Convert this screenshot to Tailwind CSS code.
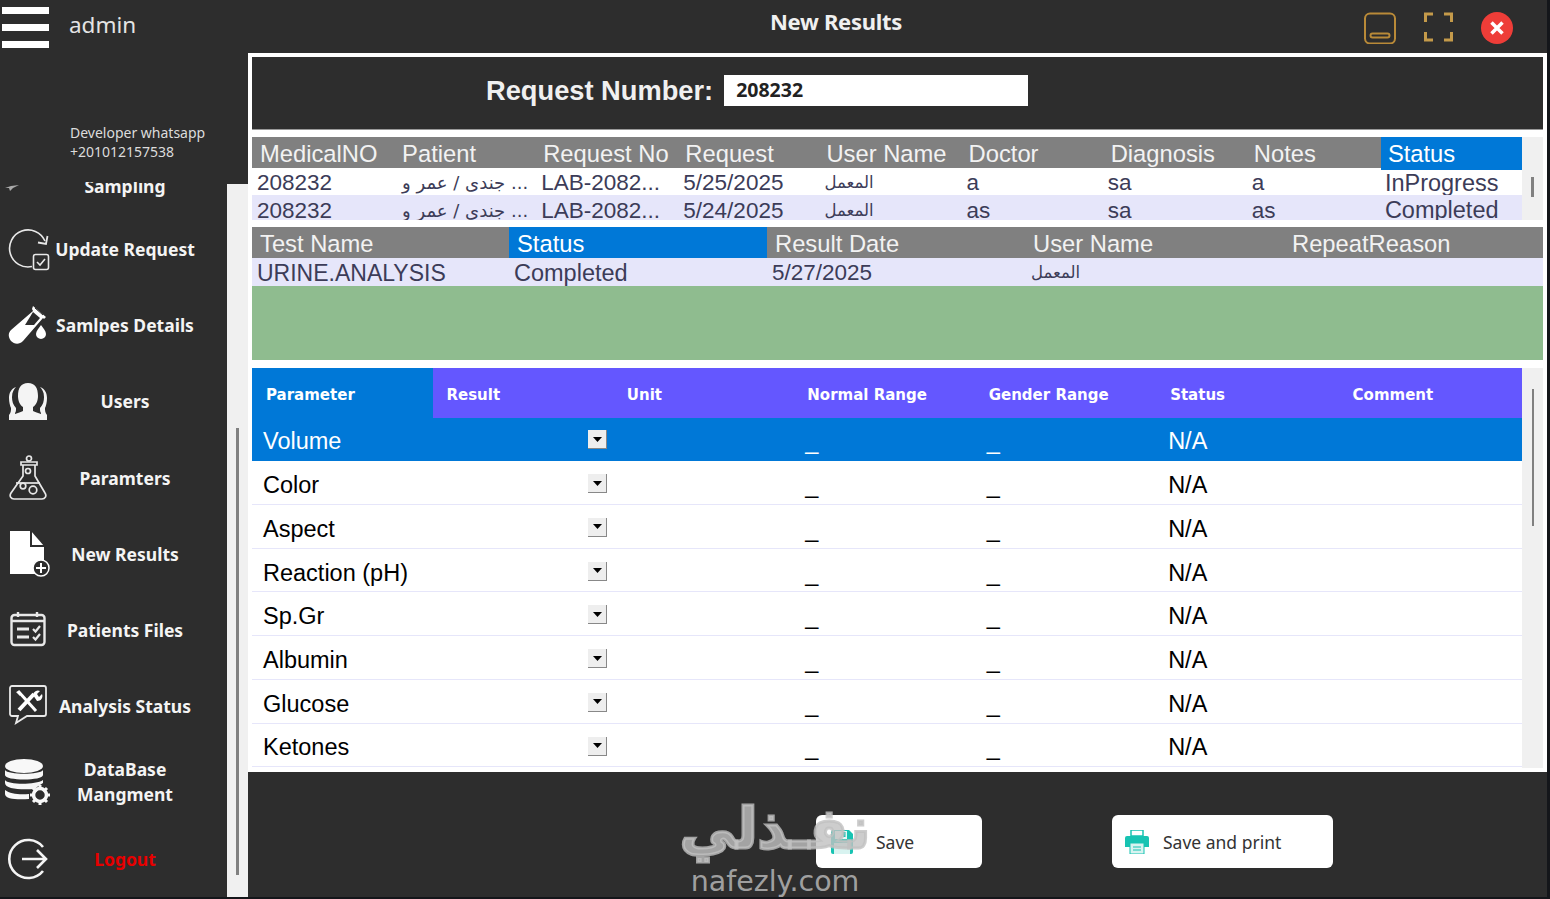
<!DOCTYPE html>
<html lang="en">
<head>
<meta charset="utf-8">
<title>New Results</title>
<script src="https://cdn.jsdelivr.net/npm/@tailwindcss/browser@4"></script>
</head>
<body class="bg-[#14161a] overflow-hidden">
<div class="relative flex w-[1547px] h-[897px] bg-[#2d2d2d] font-['Liberation_Sans',sans-serif] overflow-hidden">

  <!-- Sidebar -->
  <aside class="w-[248px] shrink-0 flex flex-col">
    <div class="h-[182px] shrink-0 flex flex-col">
      <div class="flex h-[55px] shrink-0">
        <div class="w-[47px] ml-[2px] pt-[7px] flex flex-col gap-[10px]">
          <div class="h-[7px] bg-white"></div>
          <div class="h-[7px] bg-white"></div>
          <div class="h-[7px] bg-white"></div>
        </div>
        <div class="ml-[20px] mt-[8px] text-[22.500px] leading-[34px] text-[#e4e4e4] font-['Noto_Sans',sans-serif]">admin</div>
      </div>
      <div class="ml-[70px] mt-[68px] text-[14px] leading-[19px] text-[#dcdcdc] font-['Noto_Sans',sans-serif] whitespace-nowrap">Developer whatsapp<br>+201012157538</div>
    </div>
    <div class="flex flex-1 min-h-0">
      <nav class="w-[227px] shrink-0 font-['Noto_Sans',sans-serif] font-bold text-[17.500px] text-[#f4f4f4] overflow-hidden">
        <div class="h-[29px] flex overflow-hidden">
          <div class="w-[50px] pl-[5px] pt-[3px]"><svg width="16" height="6" viewBox="0 0 16 6"><path d="M0 3 6 1l8-1-4 2-2 1-3 3-1-3z" fill="#aaa"/></svg></div>
          <div class="w-[150px] text-center leading-[24px] -mt-[8px]">Sampling</div>
        </div>
        <div class="h-[76.2px] flex items-center">
          <div class="w-[50px] pl-[7px]"><svg width="44" height="44" viewBox="0 0 44 44" fill="none" stroke="#e8e8e8" stroke-width="1.600"><path d="M38 14A18.500 18.500 0 1 0 25 39.500"/><path d="M31 15.500l8 1.500 1.500-8" stroke-width="1.800"/><rect x="26.500" y="27.500" width="15" height="15" rx="2"/><path d="M30 35l3 3 5-6"/></svg></div>
          <div class="w-[150px] text-center leading-[24px] whitespace-nowrap">Update Request</div>
        </div>
        <div class="h-[76.2px] flex items-center">
          <div class="w-[50px] pl-[7px]"><svg width="40" height="40" viewBox="0 0 40 40" fill="#fff"><path d="M26 1l13 11-2 2-1-1-20 23c-4 4-9 3-12 0-3-4-3-8 0-11L26 6l-1-2z"/><path d="M26 7l7 6-6 7H18z" fill="#2d2d2d"/><path d="M28 3l8 7" stroke="#2d2d2d" stroke-width="1" fill="none"/><path d="M34 20c2 3 5 6 5 9a5 5 0 0 1-10 0c0-3 3-6 5-9z"/></svg></div>
          <div class="w-[150px] text-center leading-[24px] whitespace-nowrap">Samlpes Details</div>
        </div>
        <div class="h-[76.2px] flex items-center">
          <div class="w-[50px] pl-[9px]"><svg width="38" height="37" viewBox="0 0 38 37" fill="#f4f4f4"><path d="M19 0c7 0 10 5 10 13 0 5-2 9-5 11v4c2 1 5 2 8 3v-1c-1-1-1-3-1-5 3-3 4-7 4-11 0-5-2-8-4-10 5 2 7 6 7 11 0 4-1 8-2 10 0 2 0 5 2 7v5H0v-5c2-2 2-5 2-7-1-2-2-6-2-10C0 10 2 6 7 4 5 6 3 9 3 14c0 4 1 8 4 11 0 2 0 4-1 5v1c3-1 6-2 8-3v-4c-3-2-5-6-5-11C9 5 12 0 19 0z"/></svg></div>
          <div class="w-[150px] text-center leading-[24px]">Users</div>
        </div>
        <div class="h-[76.2px] flex items-center">
          <div class="w-[50px] pl-[9px]"><svg width="38" height="46" viewBox="0 0 38 46" fill="none" stroke="#e8e8e8" stroke-width="1.700"><circle cx="20" cy="3.500" r="2.500"/><path d="M12 7h16v3H12z"/><path d="M14 10v11L2 38c-2 3 0 6 3 6h28c3 0 5-3 3-6L26 21V10"/><circle cx="19" cy="16" r="2.500"/><circle cx="14" cy="31" r="2.800"/><circle cx="24" cy="35" r="3.800"/><path d="M7 28h24"/></svg></div>
          <div class="w-[150px] text-center leading-[24px]">Paramters</div>
        </div>
        <div class="h-[76.2px] flex items-center">
          <div class="w-[50px] pl-[10px]"><svg width="40" height="46" viewBox="0 0 40 46"><path d="M0 0h21l13 15v28H0z" fill="#fff"/><path d="M21 0v15h13" fill="none" stroke="#2d2d2d" stroke-width="2"/><circle cx="31" cy="37" r="8" fill="#2d2d2d" stroke="#fff" stroke-width="1.500"/><path d="M31 32v10M26 37h10" stroke="#fff" stroke-width="2"/></svg></div>
          <div class="w-[150px] text-center leading-[24px]">New Results</div>
        </div>
        <div class="h-[76.2px] flex items-center">
          <div class="w-[50px] pl-[10px]"><svg width="36" height="36" viewBox="0 0 36 36" fill="none" stroke="#e8e8e8" stroke-width="2.400"><rect x="1.500" y="3" width="33" height="30" rx="3"/><path d="M1.500 9h33M8 0v5M27 0v5" /><path d="M7 17h12M7 25h12" stroke-width="2.800"/><path d="M23 17l2.500 2.500L30 14M23 25l2.500 2.500L30 22" stroke-width="2.200"/></svg></div>
          <div class="w-[150px] text-center leading-[24px]">Patients Files</div>
        </div>
        <div class="h-[76.2px] flex items-center">
          <div class="w-[50px] pl-[9px] pb-[3px]"><svg width="38" height="40" viewBox="0 0 38 40" fill="none" stroke="#e8e8e8" stroke-width="1.800"><path d="M3 1h32a2 2 0 0 1 2 2v26a2 2 0 0 1-2 2H18l-11 7 2-7H3a2 2 0 0 1-2-2V3a2 2 0 0 1 2-2z"/><path d="M9 6l18 20" stroke="#fff" stroke-width="3"/><path d="M10 25L25 9" stroke="#fff" stroke-width="4"/><path d="M24 10a5 5 0 0 1 7-4l-3 3 2 3 3-3a5 5 0 0 1-5 7z" fill="#fff" stroke="none"/><path d="M7 7l3-1 2 2-1 3z" fill="#fff" stroke="none"/></svg></div>
          <div class="w-[150px] text-center leading-[24px] whitespace-nowrap">Analysis Status</div>
        </div>
        <div class="h-[76.2px] flex items-center">
          <div class="w-[50px] pl-[5px]"><svg width="45" height="46" viewBox="0 0 45 46" fill="#f8f8f8"><ellipse cx="19" cy="7" rx="19" ry="7"/><path d="M0 11c3 5 35 5 38 0v5c0 6-38 6-38 0z"/><path d="M0 21c3 5 31 5 38 0v3c-2 1-4 3-6 4l-2 2c-15 1-30 0-30-6z"/><path d="M0 31c5 4 15 5 24 4v5c-12 1-24 0-24-5z"/><circle cx="35" cy="36" r="6.500" fill="none" stroke="#f8f8f8" stroke-width="3.500"/><path d="M35 26v5M35 41v5M25 36h5M40 36h5M28 29l3.500 3.500M38.500 39.500 42 43M42 29l-3.500 3.500M31.500 39.500 28 43" stroke="#f8f8f8" stroke-width="3"/></svg></div>
          <div class="w-[150px] text-center leading-[25px]">DataBase<br>Mangment</div>
        </div>
        <div class="h-[76.2px] flex items-center">
          <div class="w-[50px] pl-[7px]"><svg width="42" height="42" viewBox="0 0 42 42" fill="none" stroke="#f4f4f4" stroke-width="2.600"><path d="M36 9A19 19 0 1 0 36 33"/><path d="M15 21h24M30 12l9 9-9 9"/></svg></div>
          <div class="w-[150px] text-center leading-[24px] text-[#e60000]">Logout</div>
        </div>
      </nav>
      <div class="mt-[2px] w-[21px] bg-[#f0f0f0] pl-[9px] pt-[244px] pb-[22px]">
        <div class="w-[3px] h-full bg-[#808080]"></div>
      </div>
    </div>
  </aside>

  <!-- Right column -->
  <div class="w-[1299px] shrink-0 flex flex-col">
    <header class="h-[53px] shrink-0 flex items-start">
      <div class="ml-[522px] mt-[5px] text-[22px] leading-[32px] font-bold text-[#f0f0f0] font-['Noto_Sans',sans-serif] tracking-[-0.3px] whitespace-nowrap">New Results</div>
      <div class="ml-auto pr-[34px] pt-[12px] flex items-start gap-[28px]">
        <svg width="32" height="32" viewBox="0 0 32 32" fill="none" stroke="#b98a38" stroke-width="2"><rect x="1" y="1.500" width="30" height="30" rx="5"/><rect x="6.500" y="21.500" width="19" height="4" rx="2"/></svg>
        <svg width="29" height="30" viewBox="0 0 29 30" fill="none" stroke="#c49a4a" stroke-width="3"><path d="M9 2H1.500v8M20 2h7.500v8M9 28H1.500v-8M20 28h7.500v-8"/></svg>
        <svg width="32" height="32" viewBox="0 0 32 32"><circle cx="16" cy="16" r="16" fill="#ee3d38"/><path d="M10.500 10.500l11 11M21.500 10.500l-11 11" stroke="#fff" stroke-width="3.500"/></svg>
      </div>
    </header>

    <main class="h-[719px] shrink-0 bg-white border-x-4 border-t-4 border-white flex flex-col">
      <div class="h-[73px] shrink-0 bg-[#2d2d2d] border-b border-[#999] flex items-center pl-[234px] pb-[5px]">
        <div class="text-[27.250px] font-bold text-[#f0f0f0] whitespace-nowrap leading-none">Request Number:</div>
        <div class="ml-[11px] w-[304px] h-[31px] bg-white pl-[12px] text-[19.500px] leading-[29px] font-bold text-[#222] font-['Noto_Sans',sans-serif]">208232</div>
      </div>

      <div class="mt-[7px] h-[83px] shrink-0 flex bg-[#f0f0f0] overflow-hidden">
        <div class="w-[1270px] shrink-0">
          <div class="grid grid-cols-9 h-[31px] bg-[#808080] text-[23.750px] leading-[33px] text-[#f2f2f2] whitespace-nowrap">
            <div class="pl-[8px]">MedicalNO</div><div class="pl-[9px]">Patient</div><div class="pl-[9px]">Request No</div><div class="pl-[10px]">Request</div><div class="pl-[10px]">User Name</div><div class="pl-[11px]">Doctor</div><div class="pl-[12px]">Diagnosis</div><div class="pl-[14px]">Notes</div><div class="pl-[7px] bg-[#0078d7] text-white">Status</div>
          </div>
          <div class="grid grid-cols-9 h-[27px] bg-white text-[#3c3c58] text-[23.500px] leading-[30px] whitespace-nowrap overflow-hidden">
            <div class="pl-[5px] text-[22.500px]">208232</div><div class="pl-[9px] text-[18px] font-['DejaVu_Sans',sans-serif]">جندى / عمر و ...</div><div class="pl-[7px] text-[22.500px]">LAB-2082...</div><div class="pl-[8px] text-[22.500px]">5/25/2025</div><div class="pl-[8px] text-[16.500px] font-['DejaVu_Sans',sans-serif]">المعمل</div><div class="pl-[9px] text-[22.500px]">a</div><div class="pl-[9px] text-[22.500px]">sa</div><div class="pl-[12px] text-[22.500px]">a</div><div class="pl-[4px]">InProgress</div>
          </div>
          <div class="grid grid-cols-9 h-[25px] bg-[#e6e6fa] text-[#3c3c58] text-[23.500px] leading-[31px] whitespace-nowrap overflow-hidden">
            <div class="pl-[5px] text-[22.500px]">208232</div><div class="pl-[9px] text-[18px] font-['DejaVu_Sans',sans-serif]">جندى / عمر و ...</div><div class="pl-[7px] text-[22.500px]">LAB-2082...</div><div class="pl-[8px] text-[22.500px]">5/24/2025</div><div class="pl-[8px] text-[16.500px] font-['DejaVu_Sans',sans-serif]">المعمل</div><div class="pl-[9px] text-[22.500px]">as</div><div class="pl-[9px] text-[22.500px]">sa</div><div class="pl-[12px] text-[22.500px]">as</div><div class="pl-[4px]">Completed</div>
          </div>
        </div>
        <div class="flex-1 pl-[9px] pt-[40px]"><div class="w-[3px] h-[20px] bg-[#808080]"></div></div>
      </div>

      <div class="mt-[7px] h-[31px] shrink-0 grid grid-cols-[257px_258px_258px_259px_259px] bg-[#808080] text-[23.750px] leading-[33px] text-[#f2f2f2] whitespace-nowrap">
        <div class="pl-[8px]">Test Name</div><div class="pl-[8px] bg-[#0078d7] text-white">Status</div><div class="pl-[8px]">Result Date</div><div class="pl-[8px]">User Name</div><div class="pl-[8px]">RepeatReason</div>
      </div>
      <div class="h-[28px] shrink-0 grid grid-cols-[257px_258px_258px_259px_259px] bg-[#e6e6fa] text-[#3c3c58] text-[23px] leading-[30px] whitespace-nowrap overflow-hidden">
        <div class="pl-[5px]">URINE.ANALYSIS</div><div class="pl-[5px] text-[23.500px]">Completed</div><div class="pl-[5px] text-[22.500px]">5/27/2025</div><div class="pl-[6px] text-[16.500px] font-['DejaVu_Sans',sans-serif]">المعمل</div><div></div>
      </div>
      <div class="h-[74px] shrink-0 bg-[#8fbc8f]"></div>

      <div class="mt-[8px] h-[400px] shrink-0 flex bg-[#f0f0f0] overflow-hidden">
        <div class="w-[1270px] shrink-0 bg-white text-[23.500px] text-black whitespace-nowrap">
          <div class="grid grid-cols-7 h-[50px] bg-[#6457ff] text-white text-[15px] leading-[54px] font-bold font-['DejaVu_Sans',sans-serif]">
            <div class="pl-[14px] bg-[#0078d7]">Parameter</div><div class="pl-[13px]">Result</div><div class="pl-[12px]">Unit</div><div class="pl-[11px]">Normal Range</div><div class="pl-[11px]">Gender Range</div><div class="pl-[11px]">Status</div><div class="pl-[12px]">Comment</div>
          </div>
          <div class="grid grid-cols-7 h-[43px] bg-[#0078d7] text-white leading-[46px]">
            <div class="pl-[11px]">Volume</div><div class="pl-[155px] pt-[12px]"><div class="w-[19px] h-[19px] bg-[#eeeeee] border-r border-b border-[#888] flex items-center justify-center"><svg width="9" height="5" viewBox="0 0 9 5"><path d="M0 0h9L4.500 5z" fill="#000"/></svg></div></div><div></div><div class="pl-[9px]">_</div><div class="pl-[9px]">_</div><div class="pl-[9px]">N/A</div><div></div>
          </div>
          <div class="grid grid-cols-7 h-[43.750px] border-b border-[#e6e6fa] leading-[48px]">
            <div class="pl-[11px]">Color</div><div class="pl-[155px] pt-[13px]"><div class="w-[19px] h-[19px] bg-[#eeeeee] border-r border-b border-[#888] flex items-center justify-center"><svg width="9" height="5" viewBox="0 0 9 5"><path d="M0 0h9L4.500 5z" fill="#000"/></svg></div></div><div></div><div class="pl-[9px]">_</div><div class="pl-[9px]">_</div><div class="pl-[9px]">N/A</div><div></div>
          </div>
          <div class="grid grid-cols-7 h-[43.750px] border-b border-[#e6e6fa] leading-[48px]">
            <div class="pl-[11px]">Aspect</div><div class="pl-[155px] pt-[13px]"><div class="w-[19px] h-[19px] bg-[#eeeeee] border-r border-b border-[#888] flex items-center justify-center"><svg width="9" height="5" viewBox="0 0 9 5"><path d="M0 0h9L4.500 5z" fill="#000"/></svg></div></div><div></div><div class="pl-[9px]">_</div><div class="pl-[9px]">_</div><div class="pl-[9px]">N/A</div><div></div>
          </div>
          <div class="grid grid-cols-7 h-[43.750px] border-b border-[#e6e6fa] leading-[48px]">
            <div class="pl-[11px]">Reaction (pH)</div><div class="pl-[155px] pt-[13px]"><div class="w-[19px] h-[19px] bg-[#eeeeee] border-r border-b border-[#888] flex items-center justify-center"><svg width="9" height="5" viewBox="0 0 9 5"><path d="M0 0h9L4.500 5z" fill="#000"/></svg></div></div><div></div><div class="pl-[9px]">_</div><div class="pl-[9px]">_</div><div class="pl-[9px]">N/A</div><div></div>
          </div>
          <div class="grid grid-cols-7 h-[43.750px] border-b border-[#e6e6fa] leading-[48px]">
            <div class="pl-[11px]">Sp.Gr</div><div class="pl-[155px] pt-[13px]"><div class="w-[19px] h-[19px] bg-[#eeeeee] border-r border-b border-[#888] flex items-center justify-center"><svg width="9" height="5" viewBox="0 0 9 5"><path d="M0 0h9L4.500 5z" fill="#000"/></svg></div></div><div></div><div class="pl-[9px]">_</div><div class="pl-[9px]">_</div><div class="pl-[9px]">N/A</div><div></div>
          </div>
          <div class="grid grid-cols-7 h-[43.750px] border-b border-[#e6e6fa] leading-[48px]">
            <div class="pl-[11px]">Albumin</div><div class="pl-[155px] pt-[13px]"><div class="w-[19px] h-[19px] bg-[#eeeeee] border-r border-b border-[#888] flex items-center justify-center"><svg width="9" height="5" viewBox="0 0 9 5"><path d="M0 0h9L4.500 5z" fill="#000"/></svg></div></div><div></div><div class="pl-[9px]">_</div><div class="pl-[9px]">_</div><div class="pl-[9px]">N/A</div><div></div>
          </div>
          <div class="grid grid-cols-7 h-[43.750px] border-b border-[#e6e6fa] leading-[48px]">
            <div class="pl-[11px]">Glucose</div><div class="pl-[155px] pt-[13px]"><div class="w-[19px] h-[19px] bg-[#eeeeee] border-r border-b border-[#888] flex items-center justify-center"><svg width="9" height="5" viewBox="0 0 9 5"><path d="M0 0h9L4.500 5z" fill="#000"/></svg></div></div><div></div><div class="pl-[9px]">_</div><div class="pl-[9px]">_</div><div class="pl-[9px]">N/A</div><div></div>
          </div>
          <div class="grid grid-cols-7 h-[43.750px] border-b border-[#e6e6fa] leading-[47px]">
            <div class="pl-[11px]">Ketones</div><div class="pl-[155px] pt-[13px]"><div class="w-[19px] h-[19px] bg-[#eeeeee] border-r border-b border-[#888] flex items-center justify-center"><svg width="9" height="5" viewBox="0 0 9 5"><path d="M0 0h9L4.500 5z" fill="#000"/></svg></div></div><div></div><div class="pl-[9px]">_</div><div class="pl-[9px]">_</div><div class="pl-[9px]">N/A</div><div></div>
          </div>
        </div>
        <div class="flex-1 pl-[10px] pt-[21px]"><div class="w-[2px] h-[137px] bg-[#808080]"></div></div>
      </div>
    </main>

    <footer class="flex-1 bg-[#2d2d2d] flex items-start pt-[43px] pl-[568px] gap-[130px] font-['Noto_Sans',sans-serif] text-[17.500px] text-[#333]">
      <div class="w-[166px] h-[53px] bg-white rounded-md flex items-center pl-[14px] gap-[22px] pt-[1px]">
        <svg width="24" height="24" viewBox="0 0 24 24"><path d="M2 0h17l4 4v18a2 2 0 0 1-2 2H3a2 2 0 0 1-2-2V2z" fill="#17c3b2"/><rect x="5" y="1" width="12" height="8" fill="#e9f7f6"/><rect x="13" y="2" width="2.500" height="5" fill="#17c3b2"/><rect x="4" y="13" width="16" height="11" fill="#d8f3f0"/></svg>
        <span>Save</span>
      </div>
      <div class="w-[221px] h-[53px] bg-white rounded-md flex items-center pl-[13px] gap-[14px] pt-[1px]">
        <svg width="24" height="24" viewBox="0 0 24 24"><path d="M6 0h12v6H6z" fill="none" stroke="#17c3b2" stroke-width="1.500"/><path d="M2 6h20a2 2 0 0 1 2 2v9H0V8a2 2 0 0 1 2-2z" fill="#17c3b2"/><rect x="5" y="13" width="14" height="11" fill="#d8f3f0" stroke="#17c3b2"/><path d="M8 17h8M8 20h8" stroke="#17c3b2"/></svg>
        <span>Save and print</span>
      </div>
    </footer>
  </div>

  <!-- Watermark over the footer -->
  <div class="absolute left-[675px] top-[792px] w-[200px] text-center text-[#c0c0c0]/80 pointer-events-none font-['DejaVu_Sans',sans-serif]">
    <div class="text-[56px] leading-[74px] font-bold whitespace-nowrap [-webkit-text-stroke:3px_#c0c0c0cc]" dir="rtl">نفـذلي</div>
    <div class="text-[28.500px] leading-[32px] whitespace-nowrap">nafezly.com</div>
  </div>
</div>
</body>
</html>
